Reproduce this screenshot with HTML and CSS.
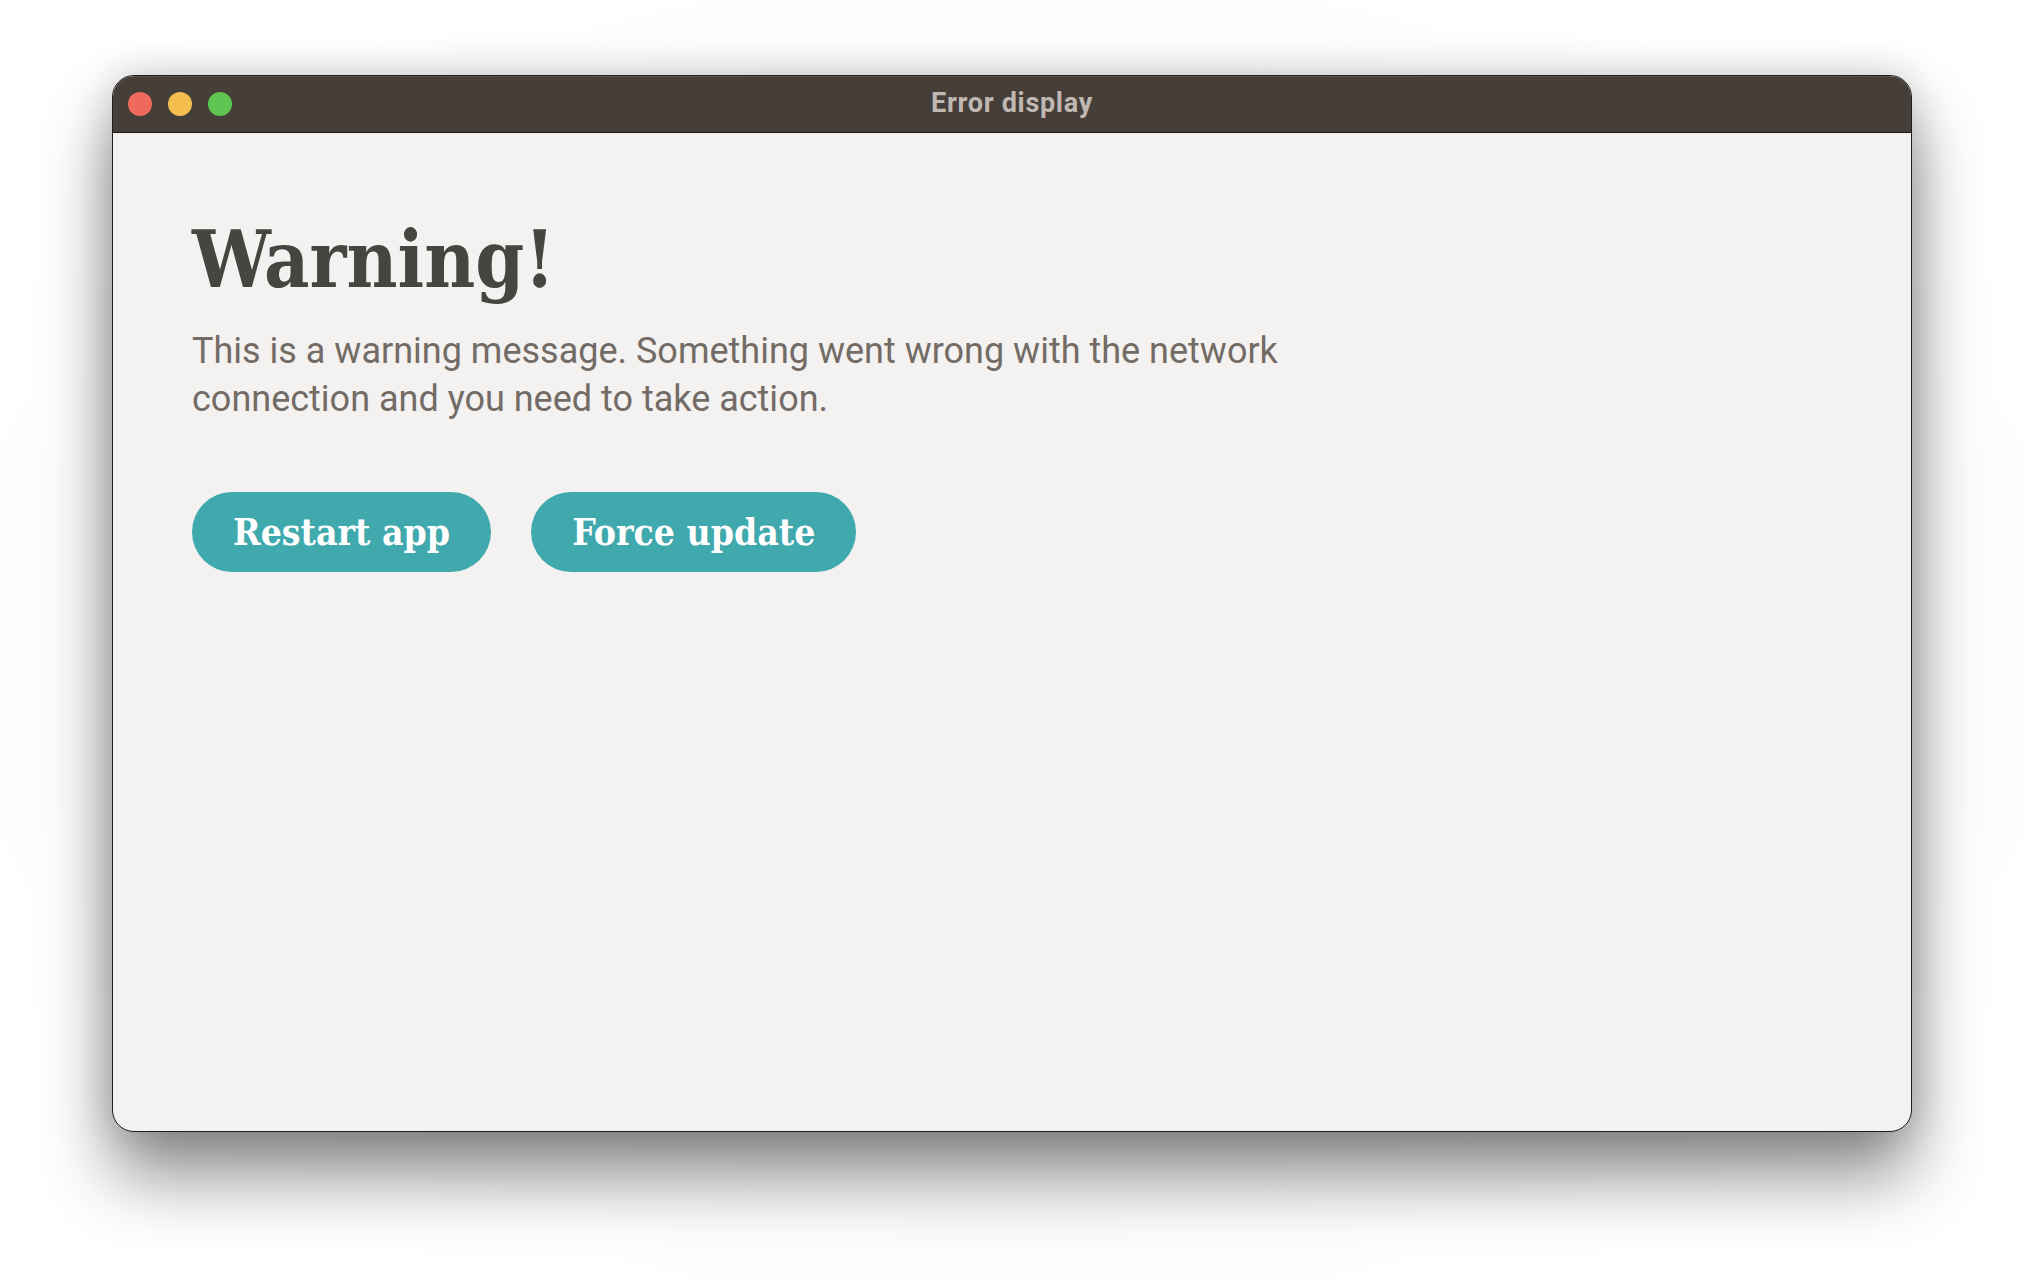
FILE: index.html
```html
<!DOCTYPE html>
<html>
<head>
<meta charset="utf-8">
<link rel="stylesheet" href="styles.css">
</head>
<body>
<div class="page">
  <div class="window">
    <div class="titlebar">
      <div class="lights">
        <span class="light red"></span>
        <span class="light yellow"></span>
        <span class="light green"></span>
      </div>
      <div class="title">Error display</div>
    </div>
    <div class="content">
      <h1 class="heading">Warning!</h1>
      <p class="message">This is a warning message. Something went wrong with the network connection and you need to take action.</p>
      <div class="actions">
        <button class="btn">Restart app</button>
        <button class="btn">Force update</button>
      </div>
    </div>
  </div>
</div>
</body>
</html>
```
FILE: styles.css
```css
html, body {
  margin: 0;
  padding: 0;
  background: #ffffff;
}
.page {
  width: 2024px;
  height: 1280px;
  box-sizing: border-box;
  padding: 75px 112px 0 112px;
  background: radial-gradient(ellipse at center, #f4f4f4 0%, #ffffff 80%);
}
.window {
  width: 1800px;
  height: 1057px;
  box-sizing: border-box;
  border: 1px solid #1f1c1a;
  border-radius: 22px;
  overflow: hidden;
  background: #f3f2f0;
  box-shadow: 0 44px 70px rgba(0,0,0,0.45), 0 0 40px rgba(0,0,0,0.18);
  display: flex;
  flex-direction: column;
}
.titlebar {
  height: 56px;
  flex: none;
  background: #463e39;
  border-bottom: 1px solid #1c1816;
  box-shadow: inset 0 1px 0 rgba(255,255,255,0.12);
  display: flex;
  align-items: center;
  position: relative;
}
.lights {
  display: flex;
  gap: 16px;
  padding-left: 15px;
}
.light {
  width: 24px;
  height: 24px;
  border-radius: 50%;
  display: block;
}
.red { background: #ee6a5e; }
.yellow { background: #f5bf4f; }
.green { background: #61c554; }
.title {
  position: absolute;
  left: 0;
  right: 0;
  top: 11px;
  text-align: center;
  font-family: Roboto, "Liberation Sans", sans-serif;
  font-weight: 700;
  font-size: 27px;
  line-height: 32px;
  letter-spacing: 0.7px;
  color: #c0b8b2;
}
.content {
  padding: 87px 79px 0 79px;
}
.heading {
  margin: 0;
  font-family: "DejaVu Serif Condensed", "DejaVu Serif", serif;
  font-weight: 700;
  font-size: 78px;
  line-height: 79px;
  color: #454541;
}
.message {
  margin: 28px 0 0 0;
  max-width: 1120px;
  font-family: Roboto, "Liberation Sans", sans-serif;
  font-size: 36px;
  line-height: 48px;
  color: #736b66;
}
.actions {
  display: flex;
  gap: 40px;
  margin-top: 69px;
}
.btn {
  height: 80px;
  padding: 0 41px;
  border: none;
  border-radius: 40px;
  background: #40a9ad;
  color: #ffffff;
  font-family: "DejaVu Serif Condensed", "DejaVu Serif", serif;
  font-weight: 700;
  font-size: 37px;
}
```
